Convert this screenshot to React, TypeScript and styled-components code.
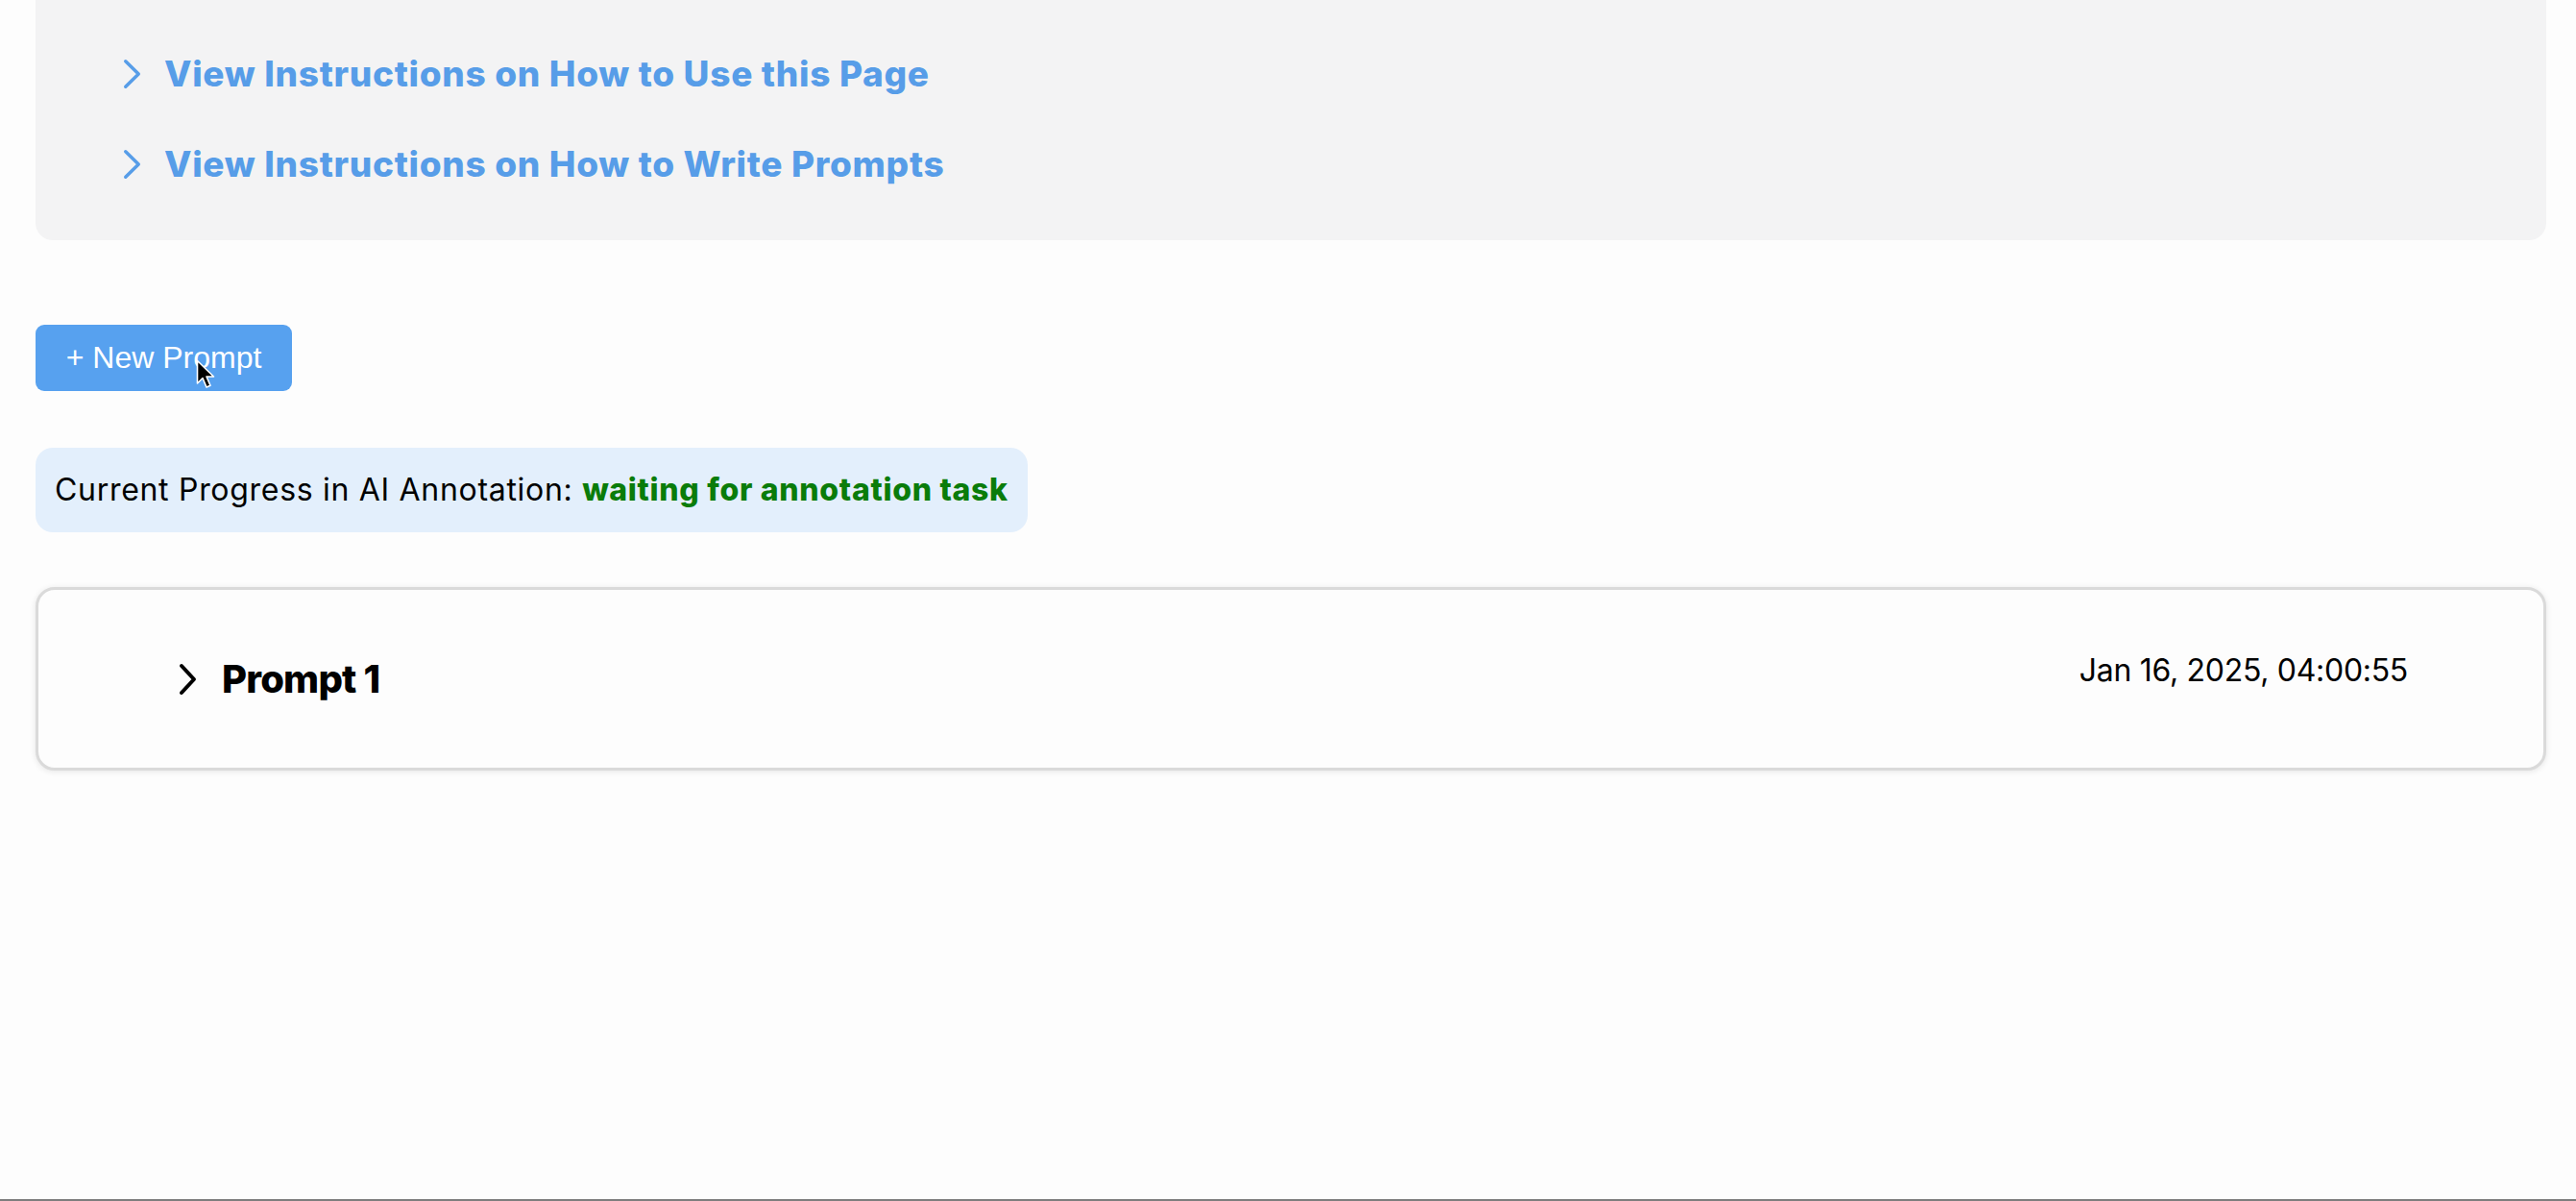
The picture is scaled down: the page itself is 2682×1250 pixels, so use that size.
import styled, { createGlobalStyle } from 'styled-components'

const GlobalStyle = createGlobalStyle`
  html, body {
    margin: 0;
    padding: 0;
    background: #fdfdfd;
  }
  * {
    box-sizing: border-box;
  }
`

const Page = styled.div`
  min-height: 100vh;
  padding: 0 31px 0 37px;
  font-family: Inter, 'Noto Sans', sans-serif;
  color: #000;
  border-bottom: 2px solid #7d7d7d;
`

const InfoPanel = styled.section`
  display: flex;
  flex-direction: column;
  gap: 40px;
  padding: 50px 91px 52px;
  background: #f3f3f4;
  border-radius: 0 0 18px 18px;
`

const Disclosure = styled.div<{ tone?: string }>`
  display: flex;
  align-items: center;
  gap: 24px;
  color: ${p => p.tone || '#579de8'};
`

const InfoTitle = styled.span`
  font-size: 37px;
  line-height: 54px;
  font-weight: 800;
  letter-spacing: 0.7px;
`

const NewPromptButton = styled.button`
  position: relative;
  align-self: flex-start;
  margin-top: 88px;
  height: 69px;
  width: 267px;
  padding: 0;
  border: none;
  border-radius: 9px;
  background: #57a1ef;
  color: #fff;
  font-family: 'Liberation Sans', Arial, sans-serif;
  font-size: 32px;
  cursor: pointer;
`

const Cursor = styled.svg`
  position: absolute;
  left: 167px;
  top: 36px;
`

const Column = styled.div`
  display: flex;
  flex-direction: column;
`

const ProgressBox = styled.div`
  align-self: flex-start;
  margin-top: 59px;
  padding: 20px 20px;
  background: #e3effc;
  border-radius: 18px;
  font-size: 32px;
  line-height: 48px;
  letter-spacing: 0.7px;
`

const Status = styled.span`
  color: #0a7c0a;
  font-weight: 800;
`

const PromptCard = styled.div`
  margin-top: 57px;
  height: 191px;
  display: flex;
  align-items: center;
  justify-content: space-between;
  padding: 0 141px 18px 146px;
  border: 3px solid #dadada;
  border-radius: 20px;
  background: #fdfdfd;
  box-shadow: 0 1px 6px rgba(0, 0, 0, 0.1);
`

const PromptHeader = styled(Disclosure)`
  padding-top: 18px;
  gap: 26px;
`

const PromptTitle = styled.span`
  font-size: 40px;
  line-height: 60px;
  font-weight: 800;
  letter-spacing: -0.8px;
`

const Timestamp = styled.span`
  font-size: 32px;
  line-height: 48px;
  letter-spacing: -0.3px;
`

const Chevron = ({ w, h, stroke }: { w: number; h: number; stroke: number }) => (
  <svg width={w} height={h} viewBox={`0 0 ${w} ${h}`} fill="none">
    <polyline
      points={`${stroke / 2 + 1},${stroke / 2 + 1} ${w - stroke / 2 - 1},${h / 2} ${stroke / 2 + 1},${h - stroke / 2 - 1}`}
      stroke="currentColor"
      strokeWidth={stroke}
      strokeLinecap="round"
      strokeLinejoin="round"
    />
  </svg>
)

export default function App() {
  return (
    <>
      <GlobalStyle />
      <Page>
        <Column>
          <InfoPanel>
            <Disclosure>
              <Chevron w={19} h={32} stroke={3.5} />
              <InfoTitle>View Instructions on How to Use this Page</InfoTitle>
            </Disclosure>
            <Disclosure>
              <Chevron w={19} h={32} stroke={3.5} />
              <InfoTitle>View Instructions on How to Write Prompts</InfoTitle>
            </Disclosure>
          </InfoPanel>

          <NewPromptButton>
            + New Prompt
            <Cursor width="20" height="32" viewBox="0 0 20 32">
              <path d="M1.5 1.5 L1.5 25 L7 19.5 L11 29 L15 27.3 L11 18 L18.5 18 Z" fill="#000" stroke="#fff" strokeWidth="1.6" strokeLinejoin="round" />
            </Cursor>
          </NewPromptButton>

          <ProgressBox>
            Current Progress in AI Annotation: <Status>waiting for annotation task</Status>
          </ProgressBox>

          <PromptCard>
            <PromptHeader tone="#000">
              <Chevron w={19} h={34} stroke={4} />
              <PromptTitle>Prompt 1</PromptTitle>
            </PromptHeader>
            <Timestamp>Jan 16, 2025, 04:00:55</Timestamp>
          </PromptCard>
        </Column>
      </Page>
    </>
  )
}
